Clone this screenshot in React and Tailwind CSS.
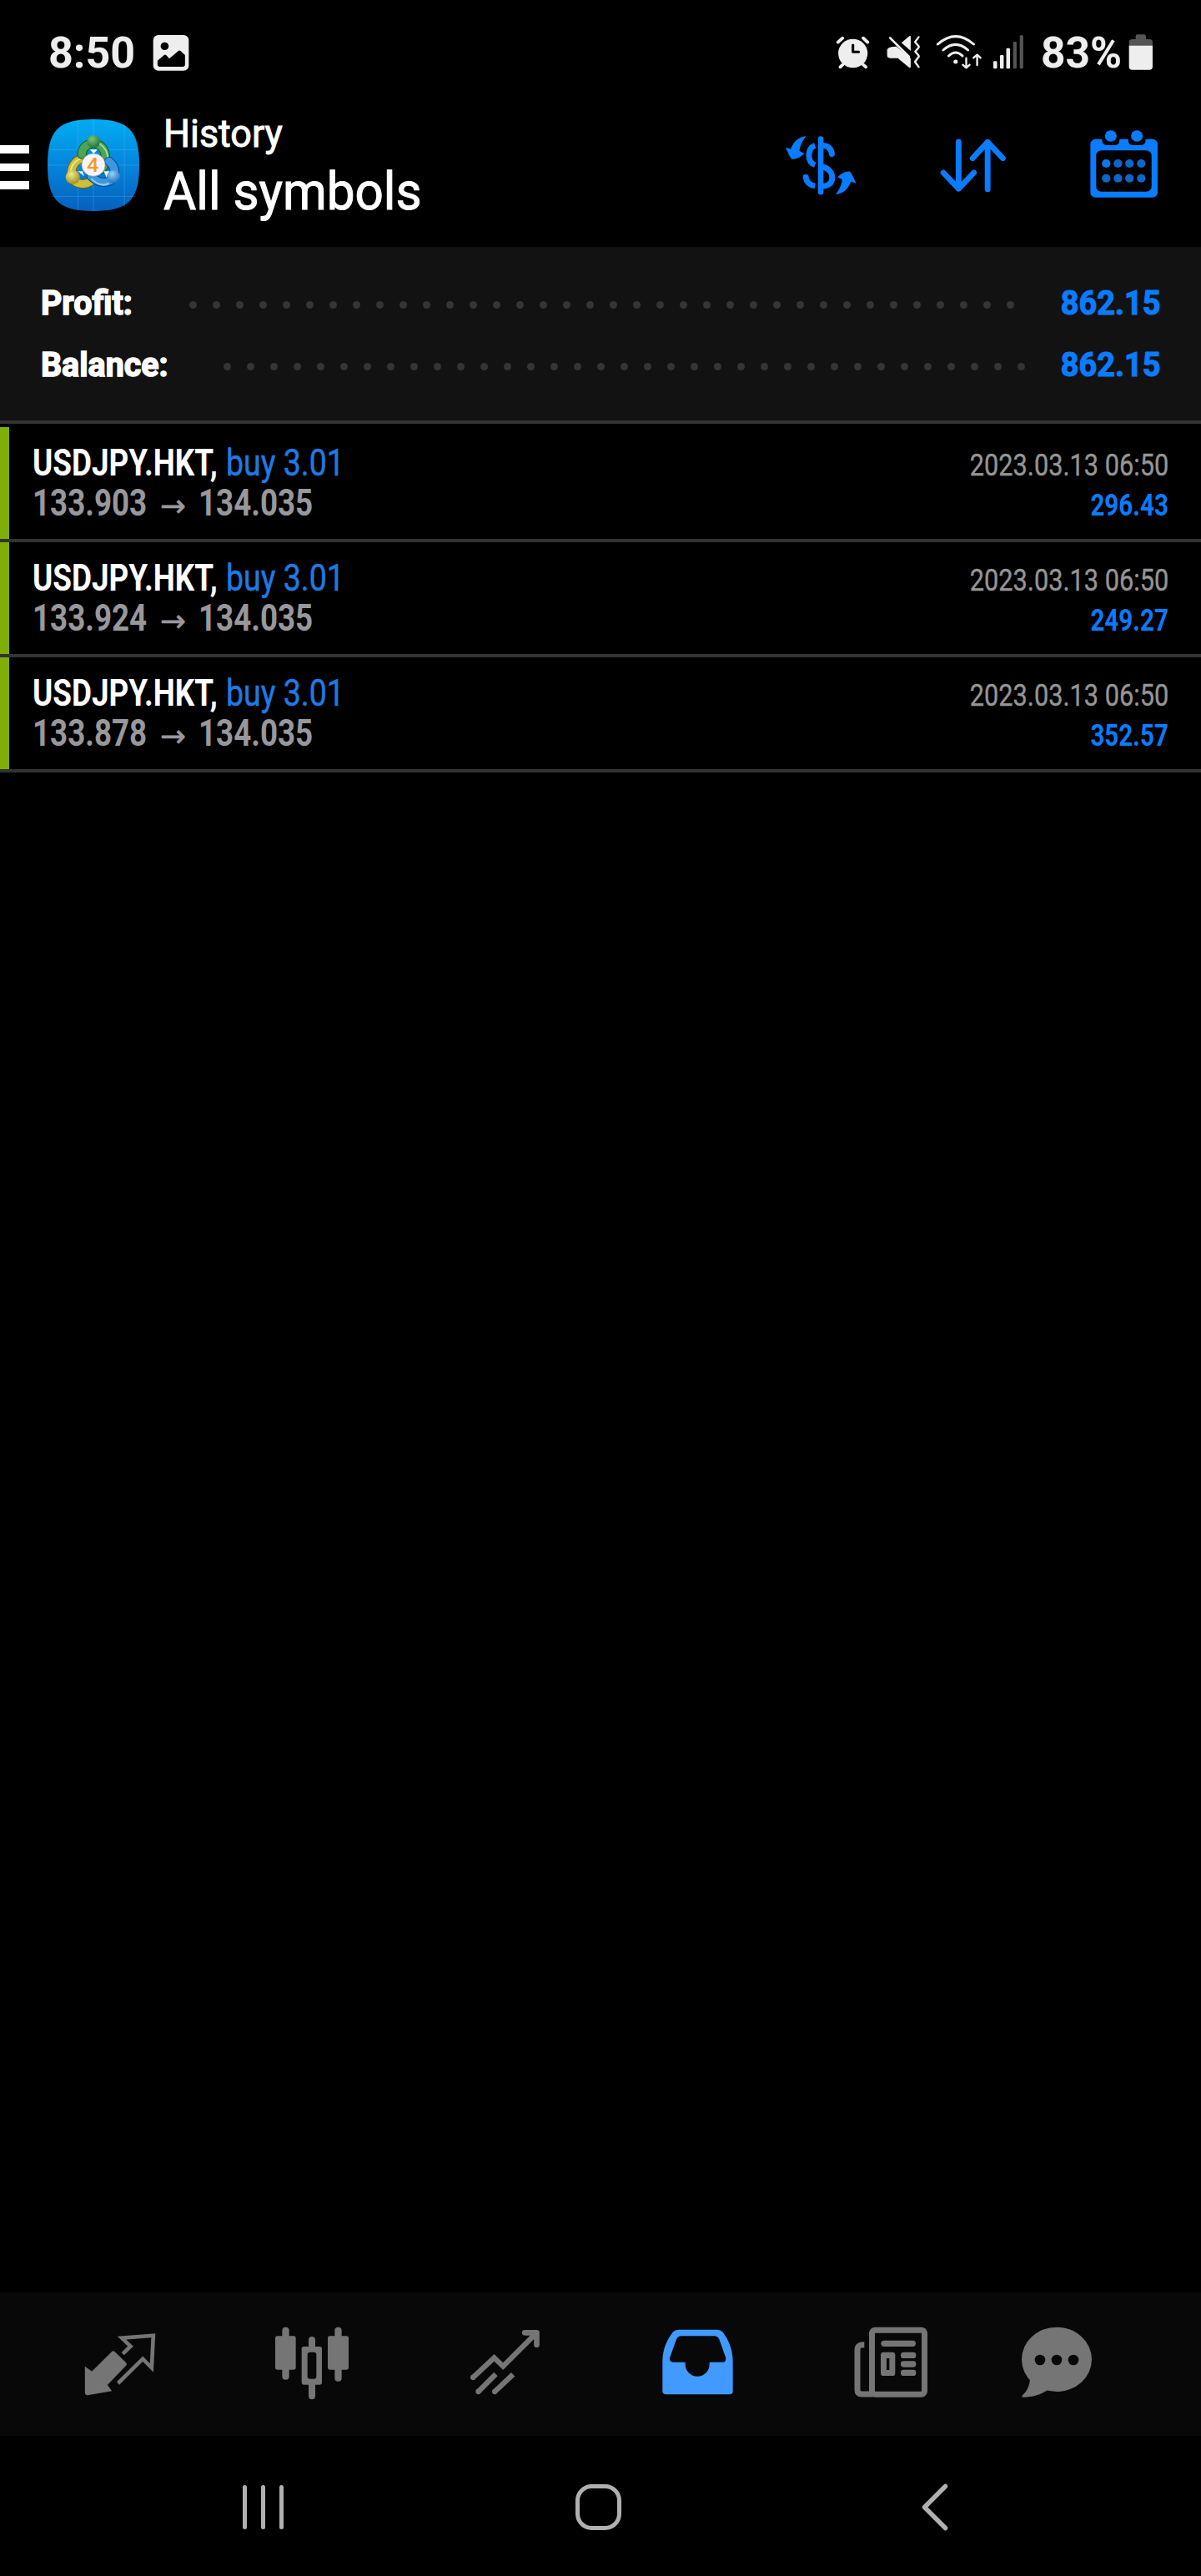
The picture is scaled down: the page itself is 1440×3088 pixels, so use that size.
const trades = [
  { id: 1, symbol: "USDJPY.HKT", side: "buy 3.01", open: "133.903", close: "134.035", time: "2023.03.13 06:50", profit: "296.43" },
  { id: 2, symbol: "USDJPY.HKT", side: "buy 3.01", open: "133.924", close: "134.035", time: "2023.03.13 06:50", profit: "249.27" },
  { id: 3, symbol: "USDJPY.HKT", side: "buy 3.01", open: "133.878", close: "134.035", time: "2023.03.13 06:50", profit: "352.57" },
];

function StatusBar() {
  return (
    <div className="h-[126px] flex items-start pt-10 pl-[58px] pr-[57px] text-[#eeeeee]">
      <span className="w-[105px] h-[45px] leading-[48px] text-[52px] font-bold whitespace-nowrap origin-left">8:50</span>
      <svg className="ml-[20px] w-[44px] h-[45px]" viewBox="532 120 128 135" preserveAspectRatio="none">
        <rect x="534" y="126" width="124" height="128" rx="18" fill="#eeeeee" />
        <circle cx="574" cy="166" r="14" fill="#000" />
        <path d="M549 218 L572 198 Q576 195 580 199 L590 211 L622 183 Q626 180 630 184 L645 198 V232 Q645 240 637 240 H557 Q549 240 549 232Z" fill="#000" />
      </svg>

      <div className="ml-auto flex items-start">
        {/* alarm */}
        <svg className="w-[41px] h-[45px]" viewBox="296 120 119 135" preserveAspectRatio="none" fill="none" stroke="#eeeeee" strokeLinecap="round">
          <ellipse cx="356" cy="192" rx="51" ry="52" fill="#eeeeee" stroke="none" />
          <path d="M304 152 L320 137 M392 137 L407 152 M320 233 L312 241 M392 233 L401 241" strokeWidth="11" />
          <path d="M356 162 V187 H376" stroke="#000" strokeWidth="9" strokeLinejoin="round" />
        </svg>
        {/* muted, vibrate */}
        <svg className="ml-[20px] w-[42px] h-[45px]" viewBox="474 120 122 135" preserveAspectRatio="none" fill="#eeeeee">
          <path d="M553 130 Q558 127 558 133 V183 L526 154Z" />
          <path d="M491 169 L508 167 L558 210 V240 Q558 246 552 242 L513 209 H486 Q476 209 476 199 V181 Q476 172 491 169Z" />
          <path d="M486 136 L552 204" fill="none" stroke="#eeeeee" strokeWidth="8" strokeLinecap="round" />
          <path d="M586 133 L573 151 L585 165 Q588 169 584 173 L574 185 L585 199 Q588 203 584 207 L573 222 L586 241" fill="none" stroke="#eeeeee" strokeWidth="7" strokeLinecap="round" strokeLinejoin="round" />
        </svg>
        {/* wifi */}
        <svg className="ml-[17px] w-[56px] h-[45px]" viewBox="645 120 162.6 135" preserveAspectRatio="none" fill="none" stroke="#eeeeee" strokeWidth="9" strokeLinecap="round" strokeLinejoin="round">
          <path d="M652 159 Q714 103 777 159" />
          <path d="M671 180 Q714 140 757 180" />
          <path d="M690 201 Q714 177 738 201" />
          <circle cx="714" cy="222" r="7.5" fill="#eeeeee" stroke="none" />
          <path d="M751 209 V243 M739 233 L751 244 L763 233 M789 234 V199 M776 208 L789 197 L801 208" strokeWidth="7" />
        </svg>
        {/* signal */}
        <svg className="ml-[12px] w-[39px] h-[45px]" viewBox="842 120 113.3 135" preserveAspectRatio="none">
          <rect x="845" y="220" width="13" height="27" rx="4" fill="#eeeeee" />
          <rect x="868" y="198" width="13" height="49" rx="4" fill="#eeeeee" />
          <rect x="890" y="173" width="13" height="74" rx="4" fill="#eeeeee" />
          <rect x="914" y="150" width="12" height="97" rx="4" fill="#555555" />
          <rect x="937" y="127" width="12" height="120" rx="4" fill="#555555" />
        </svg>
        <span className="ml-[19px] w-[105px] h-[45px] leading-[48px] text-[52px] font-bold whitespace-nowrap origin-left scale-x-[0.99]">83%</span>
        <svg className="w-[30px] h-[45px]" viewBox="1316 120 87 135" preserveAspectRatio="none">
          <rect x="1341" y="124" width="36" height="28" rx="7" fill="#555555" />
          <path d="M1318 166 V152 Q1318 141 1329 141 H1389 Q1400 141 1400 152 V166Z" fill="#555555" />
          <path d="M1318 164 H1400 V240 Q1400 251 1389 251 H1329 Q1318 251 1318 240Z" fill="#eeeeee" />
        </svg>
      </div>
    </div>
  );
}

function AppLogo() {
  return (
    <svg className="w-[110px] h-[110px]" viewBox="166 429 320 330" preserveAspectRatio="none">
      <defs>
        <linearGradient id="logoBg" x1="0" y1="0" x2="0" y2="1">
          <stop offset="0" stopColor="#03acf2" />
          <stop offset="0.5" stopColor="#0485dc" />
          <stop offset="1" stopColor="#0560bd" />
        </linearGradient>
        <radialGradient id="green" cx="0.4" cy="0.3" r="0.8">
          <stop offset="0" stopColor="#7cc47a" />
          <stop offset="1" stopColor="#14692c" />
        </radialGradient>
        <radialGradient id="yellow" cx="0.4" cy="0.3" r="0.8">
          <stop offset="0" stopColor="#f2ea88" />
          <stop offset="1" stopColor="#93830f" />
        </radialGradient>
        <radialGradient id="blue" cx="0.4" cy="0.3" r="0.8">
          <stop offset="0" stopColor="#8ed4fa" />
          <stop offset="1" stopColor="#1465b4" />
        </radialGradient>
      </defs>
      <path d="M326 429 C450 429 486 470 486 594 C486 718 450 759 326 759 C202 759 166 718 166 594 C166 470 202 429 326 429Z" fill="url(#logoBg)" />
      <path d="M272 433 V755 M326 429 V759 M434 445 V743 M174 538 H478 M166 594 H486 M180 706 H472" stroke="#7fd0ff" strokeOpacity="0.35" strokeWidth="2" />
      <g fill="none" strokeLinejoin="round" strokeLinecap="round">
        <path d="M294 568 C258 575 244 606 251 640 C264 664 298 668 320 650" stroke="#6d640e" strokeWidth="33" />
        <path d="M294 568 C258 575 244 606 251 640 C264 664 298 668 320 650" stroke="#cdbf3a" strokeWidth="27" />
        <path d="M288 568 C250 580 244 610 248 632" stroke="#ece78a" strokeWidth="6" />
        <path d="M286 556 C286 530 302 518 326 516 C352 517 369 538 368 570 C367 590 362 600 352 610" stroke="#155a2b" strokeWidth="33" />
        <path d="M286 556 C286 530 302 518 326 516 C352 517 369 538 368 570 C367 590 362 600 352 610" stroke="#4ba553" strokeWidth="27" />
        <path d="M346 516 C368 530 377 548 376 574" stroke="#a3dba0" strokeWidth="6" />
        <path d="M380 580 C398 594 404 614 396 638 C380 662 346 662 318 634" stroke="#0d4686" strokeWidth="33" />
        <path d="M380 580 C398 594 404 614 396 638 C380 662 346 662 318 634" stroke="#3d97dc" strokeWidth="27" />
        <path d="M320 644 C342 666 362 668 378 660" stroke="#8fcdf7" strokeWidth="6" />
      </g>
      <path d="M314 538 H340 L327 553Z M362 616 H382 L372 638Z M272 616 H288 L294 634Z" fill="#f4fbff" />
      <circle cx="326" cy="509" r="23" fill="url(#green)" />
      <circle cx="254" cy="637" r="25" fill="url(#yellow)" />
      <circle cx="396" cy="635" r="23" fill="url(#blue)" />
      <circle cx="326" cy="593" r="41" fill="#f5f5f7" stroke="#8a9aa0" strokeWidth="2" />
      <text x="324" y="619" textAnchor="middle" fontSize="74" fontWeight="500" fill="#f39a2b" fontFamily="Roboto, sans-serif">4</text>
    </svg>
  );
}

const dollarArrow =
  "M196 489 C165 491 150 515 143 535 L125 529 C132 545 137 560 146 571 C160 574 175 565 190 551 L173 542 C176 520 184 505 196 489Z";

function Header() {
  return (
    <header className="h-[170px] flex items-start">
      <div className="mt-[48px] w-[35px] flex flex-col gap-[12px]">
        <div className="h-[9.5px] bg-white" />
        <div className="h-[9.5px] bg-white" />
        <div className="h-[9.5px] bg-white" />
      </div>
      <div className="ml-[22px] mt-[17px]">
        <AppLogo />
      </div>
      <div className="ml-[29px] mt-[6px] w-[400px] text-white whitespace-nowrap [-webkit-text-stroke:1px_white]">
        <div className="h-[56px] leading-[56px] text-[47px] font-normal origin-left scale-x-[0.955]">History</div>
        <div className="mt-[4px] h-[76px] leading-[76px] text-[63px] font-normal origin-left scale-x-[0.955]">All symbols</div>
      </div>

      <div className="ml-auto mr-[50px] flex items-start">
        <svg className="mt-[36px] w-[87px] h-[72px]" viewBox="122 485 252.6 216" preserveAspectRatio="none" fill="none" stroke="#0a7cff" strokeWidth="20">
          <path d="M247 498 V690" strokeLinecap="round" strokeWidth="19" />
          <path d="M227 522 C212 528 206 541 206 557 C206 575 212 587 227 592" />
          <path d="M256 522 C274 524 284 535 286 553" strokeLinecap="round" />
          <path d="M247 598 C276 602 287 620 287 638 C287 656 276 668 252 669" />
          <path d="M195 636 C197 652 206 664 227 668" />
          <circle cx="195" cy="636" r="10" fill="#0a7cff" stroke="none" />
          <path d={dollarArrow} fill="#0a7cff" stroke="none" />
          <path d={dollarArrow} fill="#0a7cff" stroke="none" transform="rotate(180 247.5 593.5)" />
        </svg>
        <svg className="ml-[99px] mt-[36px] w-[80px] h-[72px]" viewBox="660 485 232.3 216" preserveAspectRatio="none" fill="none" stroke="#0a7cff" strokeWidth="20" strokeLinecap="round" strokeLinejoin="round">
          <path d="M725 509 V678 M672 620 L725 678 L778 620" />
          <path d="M826 680 V510 M774 568 L826 510 L879 568" />
        </svg>
        <svg className="ml-[99px] mt-[28px] w-[84px] h-[84px]" viewBox="1178 462 243.9 252" preserveAspectRatio="none">
          <rect x="1182" y="500" width="234" height="210" rx="18" fill="#0a7cff" />
          <rect x="1202" y="541" width="193" height="148" rx="18" fill="#000" />
          <rect x="1223" y="480" width="60" height="42" rx="15" fill="#000" />
          <rect x="1314" y="480" width="60" height="42" rx="15" fill="#000" />
          <circle cx="1253" cy="489" r="20.5" fill="#0a7cff" />
          <circle cx="1344" cy="489" r="20.5" fill="#0a7cff" />
          <circle cx="1237" cy="588" r="15" fill="#0d78ee" />
          {[1278, 1318, 1359].map((x) => (
            <circle key={x} cx={x} cy="588" r="15" fill="#0e66c8" />
          ))}
          {[1237, 1278, 1318, 1359].map((x) => (
            <circle key={x} cx={x} cy="641" r="15" fill="#0e66c8" />
          ))}
        </svg>
      </div>
    </header>
  );
}

function SummaryRow({ label, value, dots, labelClass }) {
  return (
    <div className="h-[74px] flex items-center leading-[74px] text-[41px] font-bold whitespace-nowrap">
      <div className={labelClass}>
        <span className="inline-block origin-left scale-x-[0.96] text-white [-webkit-text-stroke:1.5px_white]">{label}</span>
      </div>
      <div className="mt-[5px] flex gap-[19px]">
        {Array.from({ length: dots }, (_, i) => (
          <span key={i} className="w-[9px] h-[9px] rounded-full bg-[#353535]" />
        ))}
      </div>
      <div className="ml-auto w-[122px] flex justify-end">
        <span className="inline-block origin-right scale-x-[0.925] text-[#0a7cff] [-webkit-text-stroke:1.2px_#0a7cff]">{value}</span>
      </div>
    </div>
  );
}

function TradeRow({ trade }) {
  return (
    <div className="h-[138px] flex border-b-4 border-[#333333] whitespace-nowrap">
      <div className="w-[11px] bg-[#7fae08]" />
      <div className="ml-[28px] mt-[18px] text-[44px] leading-[48px]">
        <div className="mt-[1px] flex h-[48px]">
          <div className="w-[232px]">
            <span className="inline-block origin-left scale-x-[0.838] font-bold text-white">{trade.symbol},</span>
          </div>
          <span className="inline-block origin-left scale-x-[0.852] text-[#1f7ae5] [-webkit-text-stroke:0.5px_#1f7ae5]">{trade.side}</span>
        </div>
        <div className="flex h-[48px] font-bold text-[#98989c]">
          <div className="w-[153px]">
            <span className="inline-block origin-left scale-x-[0.835]">{trade.open}</span>
          </div>
          <div className="w-[46px] font-['DejaVu_Sans'] text-[37px] font-normal leading-[56px] [-webkit-text-stroke:0.6px_#98989c]">→</div>
          <span className="inline-block origin-left scale-x-[0.835]">{trade.close}</span>
        </div>
      </div>
      <div className="ml-auto mr-[39px] mt-[22px] flex flex-col items-end text-[37px] leading-[48px]">
        <span className="origin-right scale-x-[0.83] text-[#959595] [-webkit-text-stroke:0.4px_#959595]">{trade.time}</span>
        <span className="origin-right scale-x-[0.8] font-bold text-[#0a7cff]">{trade.profit}</span>
      </div>
    </div>
  );
}

function TabBar() {
  return (
    <nav className="h-[172px] bg-[#080808] flex pl-[28px] pt-[40px] text-[#757575]">
      {/* quotes */}
      <div className="w-[231px] flex justify-center">
        <svg className="w-[90px] h-[90px]" viewBox="115.5 145 270 270">
          <path d="M124 291 L149 309 L220 239 Q226 233 232 239 L272 278 Q277 283 272 288 L205 358 L221 380 L134 395 Q125 396 124 386Z" fill="currentColor" />
          <path d="M260 246 L288 219 L257 189 L370 180 L364 296 L332 264 L243 352" fill="none" stroke="currentColor" strokeWidth="14" />
        </svg>
      </div>
      {/* charts */}
      <div className="w-[231px] flex justify-center">
        <svg className="w-[90px] h-[90px]" viewBox="810 145 270 270" fill="currentColor">
          <rect x="810" y="182" width="74" height="121" rx="7" />
          <rect x="835" y="150" width="25" height="189" rx="12" />
          <rect x="905" y="220" width="73" height="137" rx="7" />
          <rect x="930" y="184" width="24" height="226" rx="12" />
          <rect x="926" y="240" width="32" height="96" rx="9" fill="#080808" />
          <rect x="999" y="182" width="75" height="121" rx="7" />
          <rect x="1024" y="150" width="25" height="195" rx="12" />
        </svg>
      </div>
      {/* trade */}
      <div className="w-[231px] flex justify-center">
        <svg className="w-[90px] h-[90px]" viewBox="121.5 145 270 270" fill="none" stroke="currentColor" strokeWidth="19">
          <path d="M140 331 L216 260 L248 291 L366 173" />
          <path d="M326 170 H369 V213" strokeLinecap="round" strokeLinejoin="round" strokeWidth="20" />
          <path d="M159 382 L222 319 M218 382 L284 320" />
          <g fill="currentColor" stroke="none">
            <circle cx="140" cy="331" r="9.5" />
            <circle cx="159" cy="382" r="9.5" />
            <circle cx="218" cy="382" r="9.5" />
          </g>
        </svg>
      </div>
      {/* history, active */}
      <div className="w-[231px] flex justify-center text-[#409aff]">
        <svg className="w-[90px] h-[90px]" viewBox="816 145 270 270" fill="currentColor" fillRule="evenodd">
          <path d="M880 159 H1020 Q1032 159 1040 168 C1058 192 1076 225 1076 275 V380 Q1076 392 1064 392 H836 Q823 392 823 380 V275 C823 225 842 192 860 168 Q868 159 880 159Z M892 182 H1008 Q1022 182 1027 194 L1050 258 Q1054 275 1040 276 H992 V284 A43.5 43.5 0 0 1 905 284 V276 H861 Q845 275 850 258 L873 194 Q878 182 892 182Z" />
        </svg>
      </div>
      {/* news */}
      <div className="w-[231px] flex justify-center">
        <svg className="w-[90px] h-[90px]" viewBox="129 145 270 270" fill="currentColor">
          <rect x="196.5" y="160.5" width="189" height="231" rx="12" fill="none" stroke="currentColor" strokeWidth="21" />
          <path d="M169 213 C151 213 144 217 144 232 V375 Q144 391 160 391 H200" fill="none" stroke="currentColor" strokeWidth="21" />
          <rect x="229" y="198" width="125" height="22" rx="11" />
          <path d="M238 240 H270 Q280 240 280 250 V315 Q280 325 270 325 H238 Q228 325 228 315 V250 Q228 240 238 240Z M249 262 V304 H259 V262Z" fillRule="evenodd" />
          <rect x="300" y="240" width="55" height="22" rx="10" />
          <rect x="300" y="272" width="55" height="22" rx="10" />
          <rect x="300" y="303" width="55" height="22" rx="10" />
        </svg>
      </div>
      {/* chat */}
      <div className="w-[168px] flex justify-center">
        <svg className="w-[90px] h-[90px]" viewBox="726 145 270 270" fill="currentColor">
          <ellipse cx="861" cy="266" rx="126" ry="116" />
          <path d="M765 335 C764 365 750 385 737 396 Q734 402 742 402 C775 402 800 394 828 377Z" />
          <circle cx="801" cy="268" r="19" fill="#080808" />
          <circle cx="861" cy="268" r="19" fill="#080808" />
          <circle cx="921" cy="268" r="19" fill="#080808" />
        </svg>
      </div>
    </nav>
  );
}

function SystemNav() {
  return (
    <div className="h-[168px] flex pl-[285px] pt-[55px]">
      <svg className="w-[60px] h-[60px]" viewBox="285 2975 60 60" stroke="#b0b0b0" strokeWidth="5" strokeLinecap="round">
        <path d="M293.5 2981.5 V3029.5 M315.5 2981.5 V3029.5 M337.5 2981.5 V3029.5" />
      </svg>
      <svg className="ml-[342px] w-[60px] h-[60px]" viewBox="687 2975 60 60" fill="none" stroke="#b0b0b0" strokeWidth="5">
        <rect x="692.5" y="2980.5" width="50" height="50" rx="17" />
      </svg>
      <svg className="ml-[353px] w-[45px] h-[60px]" viewBox="1100 2975 45 60" fill="none" stroke="#b0b0b0" strokeWidth="5.5" strokeLinecap="round" strokeLinejoin="round">
        <path d="M1133.5 2980.5 L1108.5 3005.5 L1133.5 3030.5" />
      </svg>
    </div>
  );
}

export default function App() {
  return (
    <div className="w-[1440px] h-[3088px] flex flex-col overflow-hidden bg-black font-[Roboto,sans-serif]">
      <StatusBar />
      <Header />
      <section className="h-[212px] border-b-4 border-[#333333] bg-[#121212] pt-[30px] pl-[49px] pr-[48px]">
        <SummaryRow label="Profit:" value="862.15" dots={36} labelClass="w-[178px]" />
        <SummaryRow label="Balance:" value="862.15" dots={35} labelClass="w-[219px]" />
      </section>
      <main className="flex-1 pt-1">
        {trades.map((trade) => (
          <TradeRow key={trade.id} trade={trade} />
        ))}
      </main>
      <TabBar />
      <SystemNav />
    </div>
  );
}
